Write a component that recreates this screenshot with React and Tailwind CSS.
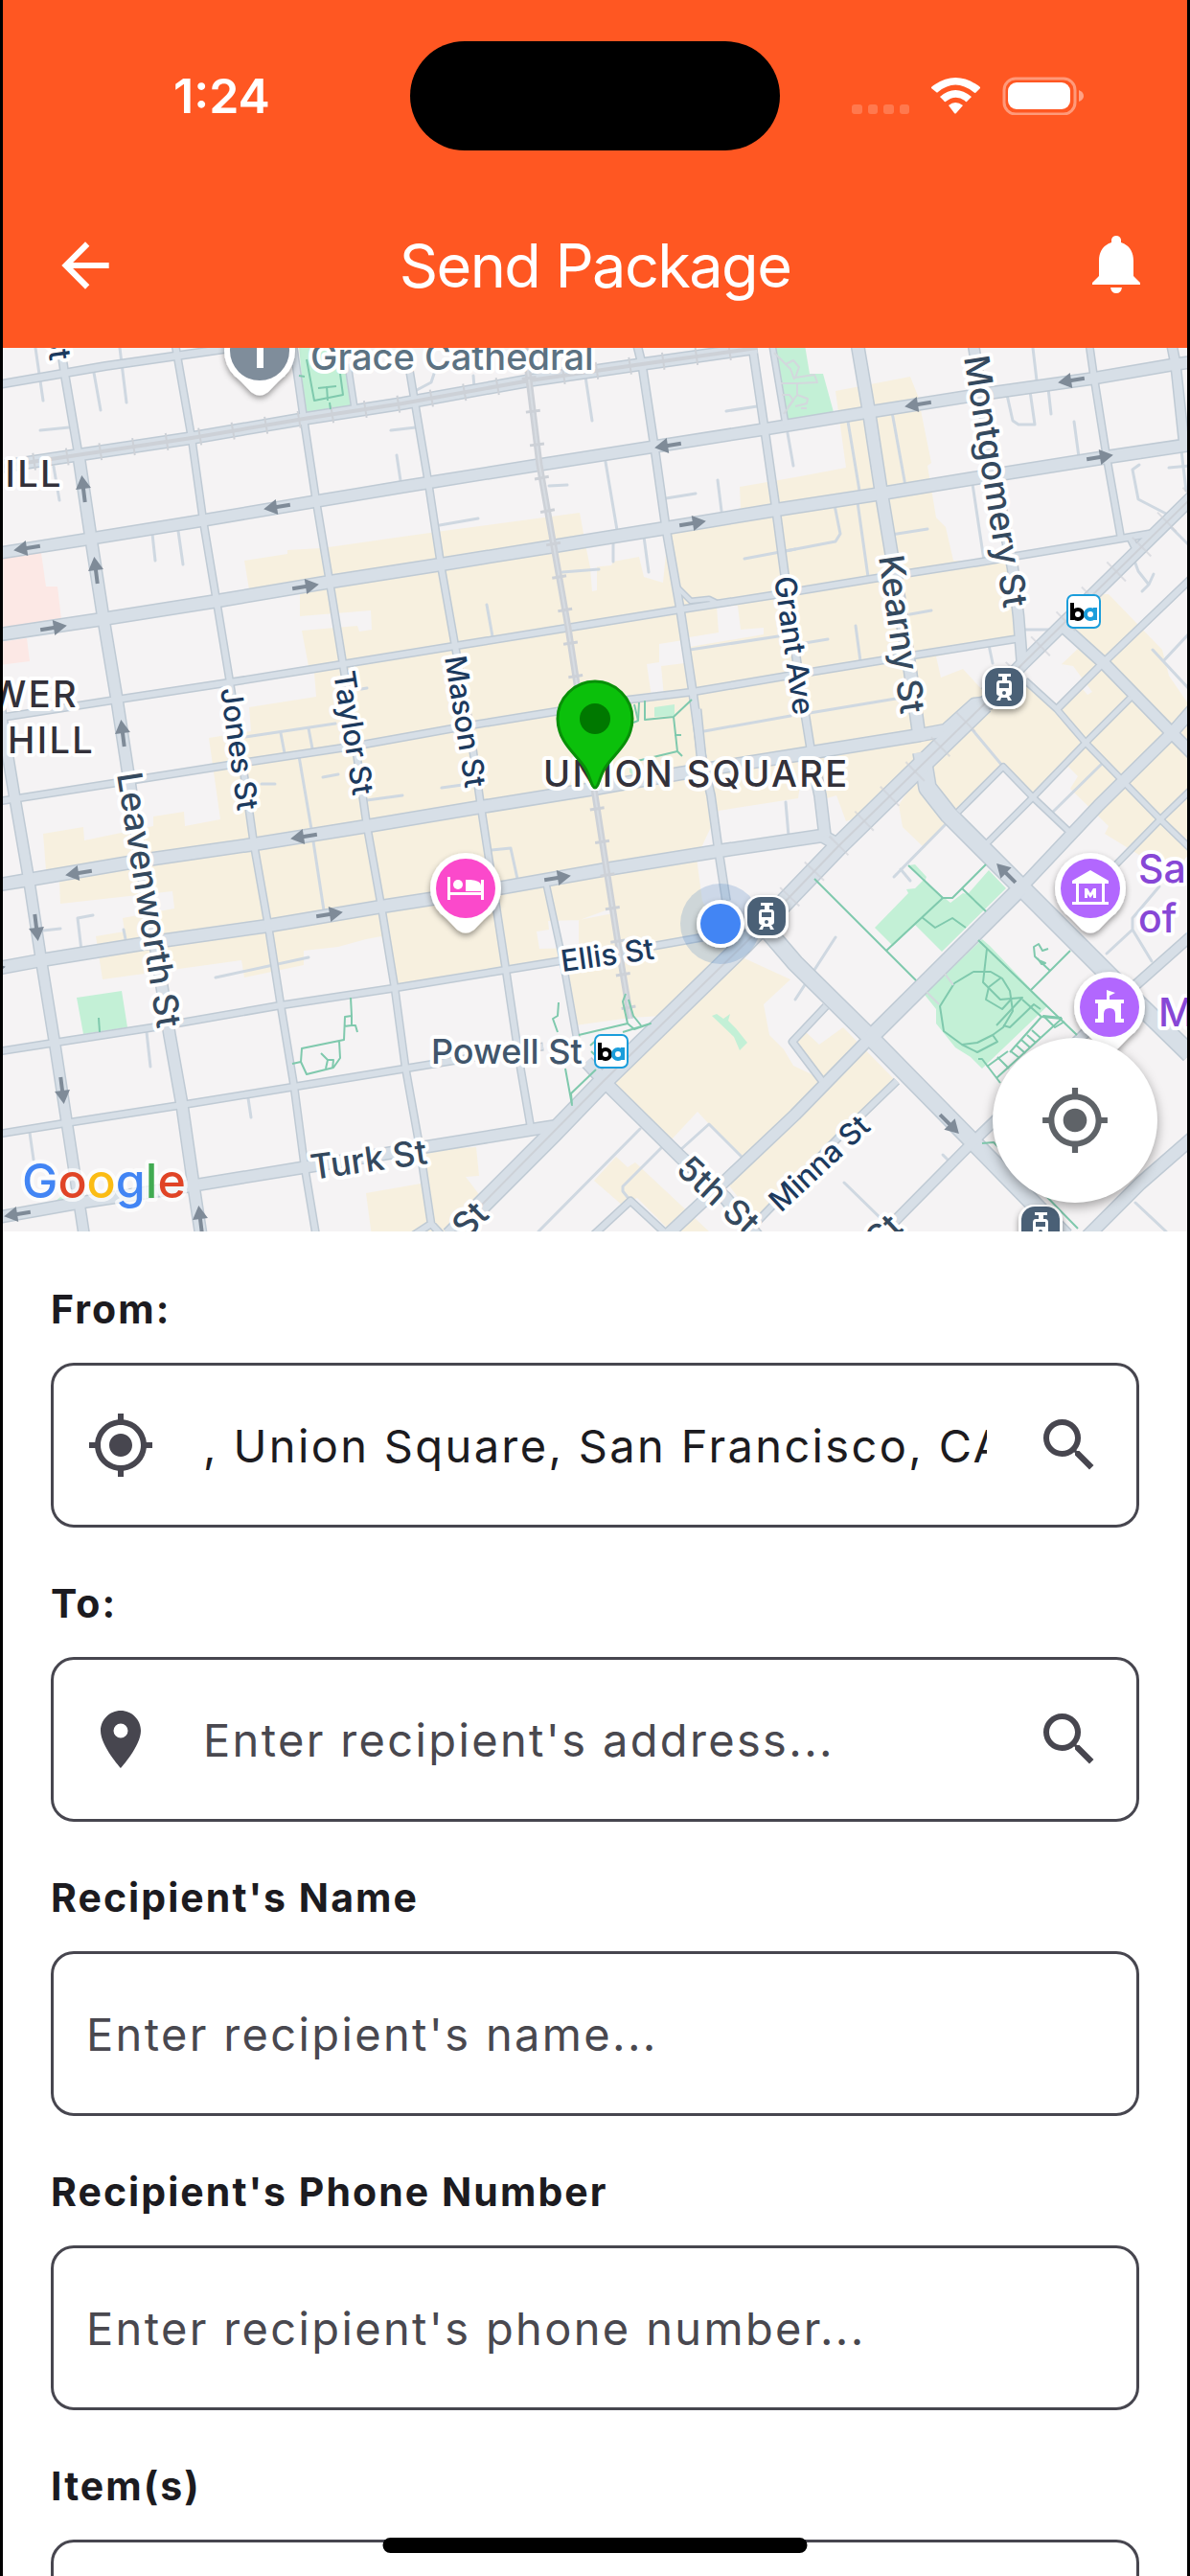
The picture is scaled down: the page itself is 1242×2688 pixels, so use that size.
import React from 'react';
import { MdArrowBack, MdMyLocation, MdPlace, MdSearch } from 'react-icons/md';

const MAP_FONT = "font-['Inter','Liberation_Sans',sans-serif]";

// street geometry: w = road width, d = points
const ROADS = [
  { w: 7, d: 'M0,401 L110,382 L235,364' },
  { w: 11, d: 'M0,487 L80,475 L200,457 L317,437 L420,421 L553,397 L670,380 L790,363' },
  { w: 11, d: 'M0,577 L95,562 L212,543 L330,523 L420,508 L563,485 L683,466 L797,448 L907,430 L1020,412 L1140,395 L1227,380 L1242,378' },
  { w: 12, d: 'M0,662 L107,646 L227,627 L345,607 L460,589 L578,570 L695,551 L810,532 L920,515 L1017,499 L1155,477 L1242,464' },
  { w: 6, d: 'M0,749 L122,730 L240,712 L358,693 L475,674 L593,655 L710,636 L807,621 L910,604 L1020,587 L1170,562 L1205,556' },
  { w: 6, d: 'M0,836 L133,815 L253,796 L373,778 L490,757 L657,730 L723,722 L823,705 L927,688 L1065,666' },
  { w: 12, d: 'M0,923 L30,918 L147,898 L265,881 L383,862 L502,842 L620,823 L710,807 L830,788 L960,767 L987,762 L1017,735 L1035,733' },
  { w: 12, d: 'M0,1010 L43,1002 L160,983 L280,966 L398,946 L520,927 L633,907 L750,888 L858,872 L872,880' },
  { w: 6, d: 'M0,1097 L57,1088 L173,1070 L293,1049 L412,1031 L528,1012 L583,1003 L683,987 L745,976' },
  { w: 6, d: 'M0,1183 L68,1172 L190,1153 L307,1134 L423,1115 L490,1104 L567,1092' },
  { w: 11, d: 'M0,1270 L83,1255 L202,1237 L318,1218 L443,1197 L553,1179 L585,1174' },
  { w: 10, d: 'M0,740 L15,830 L30,917 L43,1002 L57,1088 L70,1173 L88,1290' },
  { w: 7, d: 'M63,360 L68,393 L82,475' },
  { w: 11, d: 'M82,475 L95,562 L108,646 L122,730 L135,815 L147,898 L162,985 L177,1080 L190,1153 L202,1237 L210,1290' },
  { w: 6, d: 'M183,360 L200,457 L212,543 L226,627 L240,712 L253,796 L265,881 L280,966 L293,1049 L307,1134 L318,1218 L330,1290' },
  { w: 6, d: 'M306,360 L317,437 L330,523 L344,607 L358,693 L371,778 L383,862 L398,946 L412,1031 L423,1113 L438,1197 L450,1277 L430,1290 M450,1277 L462,1290' },
  { w: 5, d: 'M363,380 L370,426' },
  { w: 6, d: 'M425,372 L433,420 L447,503 L460,589 L475,674 L490,757 L502,842 L515,927 L528,1012 L543,1113 L554,1177' },
  { w: 7, d: 'M665,360 L670,380 L683,466 L695,551 L710,636 L723,722 L732,787 L742,830 L750,888 L758,940' },
  { w: 8, d: 'M727,740 L733,800' },
  { w: 4, d: 'M706,612 L721,627 L740,625 L750,630' },
  { w: 7, d: 'M785,360 L798,448 L810,532 L820,607 L833,700 L847,787' },
  { w: 11, d: 'M847,787 L856,830 L861,872' },
  { w: 5, d: 'M806,360 L820,443' },
  { w: 12, d: 'M895,360 L907,430 L920,515 L935,605 L950,700 L960,773' },
  { w: 17, d: 'M962,785 L968,822 L990,850 L1065,925 L1160,1020 L1242,1100' },
  { w: 10, d: 'M1016,360 L1035,480 L1057,593 L1063,643 L1067,695' },
  { w: 6, d: 'M1137,360 L1142,395 L1155,477 L1170,562 M1180,562 L1185,572' },
  { w: 9, d: 'M1223,360 L1227,380 L1236,465' },
  { w: 12, d: 'M1245,518 L1067,693 L960,803' },
  { w: 18, d: 'M1027,735 L960,800 L875,883 L777,985 L630,1128 L577,1183 L503,1257 L470,1290' },
  { w: 16, d: 'M800,970 L830,1005 L908,1082 L1017,1193 L1112,1290' },
  { w: 12, d: 'M612,1108 L637,1135 L710,1207 L757,1250 L790,1290' },
  { w: 11, d: 'M1245,740 L1223,765 L1147,840 L1065,927' },
  { w: 15, d: 'M1065,927 L908,1083' },
  { w: 11, d: 'M908,1083 L830,1163 L757,1232 L695,1290' },
  { w: 11, d: 'M1111,655 L1153,693 L1223,765 L1245,787' },
  { w: 5, d: 'M1070,710 L1103,740 L1133,775 L1172,815 L1211,855 L1245,888' },
  { w: 6, d: 'M1245,602 L1150,693 L1103,740' },
  { w: 5, d: 'M1180,728 L1133,775 L1078,832 L1030,880' },
  { w: 5, d: 'M1242,825 L1211,855 L1165,902' },
  { w: 5, d: 'M1115,867 L1078,832 L1047,800 L1000,847' },
  { w: 9, d: 'M1245,975 L1175,1037 L1017,1190 L930,1278' },
  { w: 12, d: 'M1245,1187 L1190,1235 L1135,1290' },
  { w: 6, d: 'M862,1050 L827,1087 L858,1128' },
  { w: 6, d: 'M936,1128 L880,1182 L790,1275' },
  { w: 5, d: 'M570,922 L587,1000 L602,1085' },
  { w: 6, d: 'M618,1290 L658,1253 L698,1290' },
];

const LANES = [
  'M37,363 L45,418', 'M125,363 L132,420', 'M42,449 L72,446', 'M56,487 L62,522', 'M159,557 L162,585', 'M186,554 L191,589',
  'M414,475 L419,508', 'M408,449 L434,446', 'M459,548 L499,541', 'M611,393 L618,439', 'M632,482 L644,553', 'M573,507 L592,506',
  'M695,520 L726,515', 'M749,501 L753,533', 'M758,429 L790,424', 'M640,567 L640,586', 'M672,560 L677,597', 'M587,597 L625,594',
  'M508,631 L514,664', 'M777,583 L830,573', 'M720,678 L812,664', 'M735,763 L825,747', 'M256,769 L350,755', 'M293,765 L297,786',
  'M322,760 L326,781', 'M312,789 L325,865 L338,950', 'M337,811 L353,808', 'M383,835 L420,830', 'M273,818 L287,818', 'M377,719 L383,718',
  'M461,822 L490,818', 'M513,887 L533,885 L540,917', 'M85,992 L81,958 L97,955', 'M45,971 L63,969', 'M129,970 L132,985', 'M225,1020 L322,999',
  'M153,1077 L157,1113', 'M259,1146 L262,1166', 'M31,1182 L35,1210', 'M1078,363 L1082,397', 'M1051,412 L1057,439 L1063,443 L1080,443 L1075,408',
  'M1094,405 L1097,432', 'M1121,440 L1126,477', 'M1015,505 L1027,585', 'M885,440 L897,512', 'M931,430 L945,507', 'M871,527 L877,557 L872,565 L820,575',
  'M895,524 L906,602', 'M930,558 L968,552', 'M822,452 L828,486', 'M893,653 L898,690', 'M840,671 L864,667', 'M950,641 L972,637', 'M845,744 L935,729',
  'M1068,657 L1100,657', 'M1032,673 L1036,692', 'M1189,485 L1182,490 L1188,521 L1217,536', 'M1220,488 L1242,486', 'M1233,470 L1238,512',
  'M1184,585 L1188,596 L1199,610 L1192,617 M1199,610 L1204,599', 'M1220,548 L1242,570', 'M1203,678 L1242,720 M1214,690 L1242,660',
  'M1012,758 L1047,800', 'M1150,797 L1098,848', 'M987,860 L933,915 M940,907 L950,919', 'M872,978 L830,1043', 'M668,1178 L562,1285',
  'M690,1198 L650,1238 L650,1243 L658,1253', 'M710,1200 L740,1173 L775,1208', 'M881,1234 L920,1272', 'M984,1205 L990,1211', 'M1185,1255 L1217,1285',
  'M1155,995 L1182,970 L1182,958 L1210,925 M1182,970 L1202,1003', 'M820,837 L823,872', 'M435,407 L450,399 L453,390', 'M494,392 L495,404', 'M98,389 L105,428',
];

const PATHS = [
  'M850,917 L956,1023', 'M948,903 L984,937 L994,937 L1029,902', 'M984,937 L925,992', 'M1004,927 L1029,951', 'M962,957 L976,968 L994,958 L1008,968',
  'M1021,981 L1124,1080', 'M1030,990 L1026,1025 L1044,1043 L1067,1041 L1040,1070', 'M1056,1042 L1046,1053 L1029,1043 L1032,1030 L1045,1020',
  'M1117,992 L1076,1033', 'M1096,1013 L1080,998 L1079,988 L1084,985 L1088,992 L1094,990 M1084,1002 L1091,1005 L1087,1006 L1083,1000',
  'M996,1026 L1016,1014 L1034,1014 L1046,1021 L1054,1034 L1057,1055 L1047,1072 L1036,1080 L1020,1088 L1004,1090 L985,1076 L981,1050 L996,1026',
  'M1004,1090 L1020,1098 L1041,1087 L1036,1080', 'M1047,1070 L1054,1072 L1079,1048 L1086,1053', 'M1067,1043 L1087,1061 L1054,1098', 'M1087,1061 L1108,1063 L1040,1125',
  'M1108,1062 L1089,1060 L1101,1072 L1111,1066', 'M1021,1105 L1025,1105 L1044,1130', 'M1030,1113 L1052,1097 M1041,1103 L1053,1115 M1055,1097 L1064,1104 M1061,1091 L1070,1099 M1066,1085 L1075,1093 M1072,1080 L1081,1088 M1077,1075 L1086,1083',
  'M667,733 L666,752 L661,754', 'M673,731 L673,751 L703,748 L722,730 M703,748 L707,784 L665,794', 'M704,767 L711,767 M707,784 L712,789 M662,735 L666,752', 'M661,795 L645,797',
  'M103,1062 L104,1077', 'M366,1041 L367,1060 L360,1061 L359,1085 L315,1094 L314,1108 L320,1121 L348,1114 L355,1104 L354,1086 M367,1060 L367,1070 L359,1071 M367,1070 L371,1070 L373,1077 M335,1099 L342,1106 L348,1106 L347,1115 M342,1106 L340,1115 M314,1108 L305,1110',
  'M583,1046 L582,1060 L577,1063 L582,1077 M590,1115 L597,1153 L596,1141 L622,1116', 'M653,1037 L650,1045 L655,1068 L604,1080 M655,1068 L662,1074 L679,1068 L650,1077 M656,1043 L661,1060 L669,1070 M616,1091 L625,1083 M617,1097 L630,1110',
  'M1025,1193 L1037,1192 L1125,1282', 'M320,375 L328,418 L358,412 L353,375 M332,405 L351,403 M341,403 L342,418 M312,392 L318,393 M344,420 L345,427',
];

const GARDEN_PATHS = [
  'M808,368 L825,385 L829,396 M820,380 L828,376 L834,383 L830,394 L850,391 L853,399 L832,400 L832,412 L822,425', 'M815,400 L832,400 M816,412 L824,412 L828,418 L818,432 M832,412 L843,416 L842,421 L830,424 M842,426 L836,426', 'M986,1016 L995,1028 M967,1035 L980,1048',
];

const ARROWS = [
  [56, 655, -9], [319, 612, -9], [344, 954, -9], [582, 916, -9], [723, 546, -9], [1148, 477, -9],
  [28, 572, 171], [289, 529, 171], [697, 465, 171], [958, 422, 171], [1118, 397, 171], [317, 873, 171], [82, 911, 171], [18, 1267, 171],
  [87, 510, -97], [100, 595, -97], [128, 765, -97], [209, 1272, -97],
  [38, 968, 83], [65, 1138, 83], [1050, 911, -135], [991, 1173, 45], [-8, 1011, -9],
];

function StreetLabel({ x, y, r = 0, size = 32, color = '#34495e', anchor = 'start', weight = 500, children }) {
  return (
    <text
      transform={`translate(${x} ${y}) rotate(${r})`}
      fontSize={size}
      fontWeight={weight}
      textAnchor={anchor}
      fill={color}
      stroke="#fff"
      strokeWidth="8"
      strokeLinejoin="round"
      paintOrder="stroke"
    >
      {children}
    </text>
  );
}

function PlacePin({ x, y, color, children }) {
  return (
    <g transform={`translate(${x} ${y})`}>
      <g filter="url(#pin-shadow)" fill="#fff">
        <circle r="37" />
        <path d="M-31,20 L-9,43 Q0,50 9,43 L31,20 Z" />
      </g>
      <circle r="31" fill={color} />
      {children}
    </g>
  );
}

function TramStop({ x, y }) {
  return (
    <g transform={`translate(${x} ${y})`}>
      <rect x="-23" y="-22" width="46" height="45" rx="16" fill="#fff" filter="url(#pin-shadow)" />
      <rect x="-20" y="-20" width="40" height="40" rx="14" fill="#4a6076" />
      <path d="M-6,-14 H7 V-11 H3 V-7 H5 Q8,-7 8,-3 V6 Q8,9 5,9 L8,14 H4 L3,11 H-3 L-4,14 H-8 L-5,9 Q-8,9 -8,6 V-3 Q-8,-7 -5,-7 H-2 V-11 H-6 Z" fill="#fff" />
      <rect x="-5" y="-4" width="10" height="5" fill="#4a6076" />
      <circle cy="6" r="2" fill="#4a6076" />
    </g>
  );
}

function BartStop({ x, y }) {
  return (
    <g transform={`translate(${x} ${y})`}>
      <rect x="-17" y="-17" width="34" height="34" rx="6" fill="#fff" stroke="#1a9ddb" strokeWidth="2" />
      <path d="M-14,-9 H-10 V9 H-14 Z" fill="#000" />
      <circle cx="-6" cy="3" r="5" fill="none" stroke="#000" strokeWidth="4" />
      <path d="M10,-4 H14 V9 H10 Z" fill="#1a9ddb" />
      <circle cx="7" cy="3" r="5" fill="none" stroke="#1a9ddb" strokeWidth="4" />
    </g>
  );
}

function CityMap() {
  return (
    <svg viewBox="3 363 1236 922" className={`block h-auto w-full ${MAP_FONT}`} role="img" aria-label="Map of Union Square">
      <defs>
        <filter id="pin-shadow" x="-30%" y="-30%" width="160%" height="160%">
          <feDropShadow dx="0" dy="3" stdDeviation="3" floodColor="#000" floodOpacity="0.4" />
        </filter>
      </defs>

      <rect x="0" y="360" width="1242" height="930" fill="#f5f3f4" />

      {/* commercial blocks */}
      <g fill="#f7f0df">
        <path d="M255,585 L300,578 L300,574 L335,572 L350,570 L420,560 L470,553 L605,535 L612,573 L616,592 L638,590 L640,586 L667,581 L672,602 L692,608 L697,557 L773,530 L772,508 L830,498 L883,488 L872,408 L950,393 L958,413 L972,483 L968,486 L977,540 L987,550 L995,585 L1050,587 L1062,667 L977,685 L982,707 L1005,698 L1030,725 L920,845 L883,857 L873,830 L863,833 L856,817 L835,820 L833,833 L750,846 L727,895 L733,940 L760,990 L690,1060 L658,1062 L600,1070 L587,1003 L412,1031 L398,977 L382,980 L353,988 L317,992 L317,1007 L255,1020 L252,1002 L107,1022 L100,977 L130,972 L128,958 L182,948 L180,930 L63,943 L62,920 L48,908 L45,870 L87,863 L88,877 L160,862 L160,852 L192,847 L193,862 L230,855 L218,770 L262,763 L260,738 L330,727 L328,702 L322,695 L315,658 L373,653 L375,659 L388,657 L387,637 L313,643 L313,618 L260,615 Z" />
        <path d="M1111,655 L1140,620 L1157,620 L1213,678 L1220,705 L1242,737 L1242,905 L1197,897 L1153,870 L1157,862 L1117,823 L1125,810 L1115,800 L1078,832 L1047,800 L1002,840 L965,885 L942,863 L938,840 L960,807 L1030,728 L1070,710 L1103,740 L1128,715 L1108,693 L1127,675 Z" />
        <path d="M760,990 L777,1000 L825,1022 L797,1048 L803,1080 L818,1095 L828,1112 L862,1128 L935,1128 L830,1235 L790,1275 L757,1232 L775,1208 L740,1173 L728,1160 L700,1190 L637,1130 Z" />
        <path d="M829,1086 L841,1077 L855,1090 L880,1072 L935,1128 L862,1130 Z" />
        <path d="M643,1207 L655,1218 L663,1213 L740,1285 L700,1285 L665,1250 L650,1258 L620,1232 Z" />
        <path d="M443,1200 L497,1197 L500,1227 L486,1228 L505,1253 L470,1290 L388,1290 L382,1245 L445,1234 Z" />
      </g>
      <g fill="#f5f3f4">
        <path d="M748,633 L770,632 L773,657 L797,655 L797,662 L720,675 L719,665 L750,660 Z" />
        <path d="M688,672 L713,668 L715,692 L690,695 L693,727 L680,727 L675,693 L688,691 Z" />
        <path d="M560,972 L573,970 L572,961 L605,960 L640,947 L640,953 L604,960 L604,989 L563,990 Z" />
        <path d="M616,592 L623,590 L623,616 L618,617 Z" />
        <path d="M1078,836 L1112,867 L1065,915 L1034,882 Z M1047,804 L1075,832 L1030,876 L1004,847 Z" />
        <path d="M1108,693 L1135,725 L1140,722 L1120,695 Z" />
      </g>

      {/* hospital grounds */}
      <path d="M0,578 L43,577 L48,612 L60,612 L64,646 L0,656 Z M0,670 L28,666 L31,690 L0,694 Z" fill="#fce8e5" />

      {/* parks */}
      <g fill="#c3f0d6">
        <path d="M312,360 L358,360 L367,423 L318,431 Z" />
        <path d="M808,360 L840,360 L845,390 L859,390 L870,430 L820,438 Z" />
        <path d="M80,1041 L127,1034 L133,1072 L87,1079 Z" />
        <path d="M683,738 L704,735 L704,747 L683,748 Z" />
        <path d="M743,1060 L748,1058 L755,1063 L762,1058 L760,1065 L768,1073 L780,1088 L772,1096 L766,1082 Z" />
        <path d="M913,968 L948,932 L946,928 L955,927 L965,917 L948,903 L955,902 L967,915 L965,920 L992,942 L1005,932 L1010,933 L1032,908 L1050,927 L983,993 L955,965 L932,987 Z" />
        <path d="M1025,980 L1033,987 L1093,1050 L1025,1115 L1013,1103 L997,1093 L977,1068 L977,1053 L965,1038 Z" />
        <path d="M58,1253 L67,1246 L68,1253 Z" />
        <circle cx="661" cy="804" r="4" />
      </g>

      <g fill="none" strokeLinejoin="round">
        <g stroke="#cfd8e1" strokeWidth="3" strokeLinecap="round">
          {LANES.map((d) => <path key={d} d={d} />)}
        </g>
        <g stroke="#bfcad4">
          {ROADS.map(({ w, d }) => <path key={d} d={d} strokeWidth={w + 3} />)}
        </g>
        <g stroke="#d7dfe7">
          {ROADS.map(({ w, d }) => <path key={d} d={d} strokeWidth={w} />)}
        </g>

        {/* cable car and rail tracks */}
        <g stroke="#cdd1d7">
          <path d="M0,487 L80,475 L200,457 L317,437 L420,421 L553,397 L670,380 L790,363" strokeWidth="4" />
          <path d="M0,487 L80,475 L200,457 L317,437 L420,421 L553,397 L670,380 L790,363" strokeWidth="18" strokeDasharray="2 33" />
          <path d="M548,363 L563,485 L578,570 L593,655 L606,740 L620,823 L633,907 L647,997 L658,1063" strokeWidth="7" />
          <path d="M548,363 L563,485 L578,570 L593,655 L606,740 L620,823 L633,907 L647,997 L658,1063" stroke="#d7dce2" strokeWidth="2" />
          <path d="M552,393 L563,485 L578,570 L593,655 L606,740 L620,823 L633,907 L647,997 L658,1063" strokeWidth="15" strokeDasharray="3 32" />
          <path d="M1245,518 L1067,693 L1027,735 L875,883 L777,985 L630,1128 L503,1257 L470,1290" strokeWidth="2" />
          <path d="M1245,518 L1067,693 L1027,735 L875,883 L777,985" strokeWidth="28" strokeDasharray="2 35" opacity="0.6" />
        </g>

        <g stroke="#7fc9ad" strokeWidth="2">
          {PATHS.map((d) => <path key={d} d={d} />)}
        </g>
        <g stroke="#d3d8dd" strokeWidth="2">
          {GARDEN_PATHS.map((d) => <path key={d} d={d} />)}
        </g>
      </g>

      {/* one-way arrows */}
      <g fill="#7f8b98">
        {ARROWS.map(([x, y, r]) => (
          <path key={`${x}-${y}`} transform={`translate(${x} ${y}) rotate(${r})`} d="M-14,-2 H0 V-8 L14,0 L0,8 V2 H-14 Z" />
        ))}
      </g>

      <StreetLabel x={52} y={377} r={82} anchor="end" color="#1c3a5e">St</StreetLabel>
      <StreetLabel x={230} y={719} r={82} color="#1c3a5e" size={31}>Jones St</StreetLabel>
      <StreetLabel x={348} y={702} r={81} color="#1c3a5e" size={31}>Taylor St</StreetLabel>
      <StreetLabel x={464} y={686} r={81} color="#1c3a5e" size={31}>Mason St</StreetLabel>
      <StreetLabel x={808} y={603} r={82} color="#1c3a5e" size={31}>Grant Ave</StreetLabel>
      <StreetLabel x={122} y={808} r={81} size={36}>Leavenworth St</StreetLabel>
      <StreetLabel x={917} y={581} r={82} size={36}>Kearny St</StreetLabel>
      <StreetLabel x={1006} y={373} r={81} size={36}>Montgomery St</StreetLabel>
      <StreetLabel x={587} y={1014} r={-8} color="#1c3a5e" size={31}>Ellis St</StreetLabel>
      <StreetLabel x={326} y={1231} r={-8} size={36}>Turk St</StreetLabel>
      <StreetLabel x={450} y={1110} color="#41566c" size={36}>Powell St</StreetLabel>
      <StreetLabel x={815} y={1266} r={-43} color="#1c3a5e" size={31}>Minna St</StreetLabel>
      <StreetLabel x={704} y={1222} r={43} size={36}>5th St</StreetLabel>
      <StreetLabel x={512} y={1269} r={-45} anchor="end" size={36}>St</StreetLabel>
      <StreetLabel x={944} y={1283} r={-43} anchor="end" size={36}>St</StreetLabel>
      <StreetLabel x={324} y={386} color="#5c7282" size={38}>Grace Cathedral</StreetLabel>

      {/* neighbourhood names are set wide */}
      <g className="tracking-[0.15em]">
        <StreetLabel x={66} y={508} anchor="end" color="#33313a" size={38}>HILL</StreetLabel>
        <StreetLabel x={82} y={738} anchor="end" color="#33313a" size={38}>LOWER</StreetLabel>
        <StreetLabel x={8} y={786} color="#33313a" size={38}>HILL</StreetLabel>
        <StreetLabel x={567} y={821} color="#33313a" size={38}>UNION SQUARE</StreetLabel>
      </g>

      <StreetLabel x={1188} y={921} color="#8747d6" size={41}>San</StreetLabel>
      <StreetLabel x={1188} y={973} color="#8747d6" size={41}>of M</StreetLabel>
      <StreetLabel x={1209} y={1071} color="#8747d6" size={41}>M</StreetLabel>

      <BartStop x={1131} y={638} />
      <BartStop x={638} y={1097} />
      <TramStop x={1048} y={717} />

      {/* current position */}
      <circle cx="752" cy="964" r="42" fill="#3f7cc0" opacity="0.22" />
      <TramStop x={800} y={956} />
      <circle cx="752" cy="964" r="25" fill="#fff" filter="url(#pin-shadow)" />
      <circle cx="752" cy="964" r="21" fill="#4285f4" />
      <TramStop x={1086} y={1279} />

      <PlacePin x={271} y={366} color="#7f8d9b">
        <path d="M-3,-20 H4 V18 H-3 Z M-12,-12 H12 V-5 H-12 Z" fill="#fff" />
      </PlacePin>
      <PlacePin x={486} y={927} color="#fb49cb">
        <path d="M-19,-12 H-16 V4 H16 V-9 H19 V12 H16 V7 H-16 V12 H-19 Z M0,-9 H5 Q16,-8 16,-3 V3 H0 Z" fill="#fff" />
        <circle cx="-8" cy="-4" r="5" fill="#fff" />
      </PlacePin>
      <PlacePin x={1138} y={927} color="#b267fe">
        <path d="M0,-19 L19,-8 V-5 H15 V14 H19 V17 H-19 V14 H-15 V-5 H-19 V-8 Z" fill="#fff" />
        <path d="M-12,-5 H12 V14 H-12 Z" fill="#b267fe" />
        <path d="M-6,10 V0 H-3 L0,5 L3,0 H6 V10 H3 V6 L0,10 L-3,6 V10 Z" fill="#fff" />
      </PlacePin>
      <PlacePin x={1158} y={1051} color="#b267fe">
        <path d="M-3,-18 L6,-15 L0,-12 V-8 H15 V-4 H12 V12 H15 V16 H6 V7 Q6,1 0,1 Q-6,1 -6,7 V16 H-15 V12 H-12 V-4 H-15 V-8 H-3 Z" fill="#fff" />
      </PlacePin>

      {/* pickup marker */}
      <path d="M621,822 C617,822 616,808 609,799 C601,787 582,774 582,750 A39,39 0 0 1 660,750 C660,774 641,787 633,799 C626,808 625,822 621,822 Z" fill="#0bc00b" stroke="#088f08" strokeWidth="3" />
      <circle cx="621" cy="750" r="16" fill="#007800" />

      <text x="23" y="1250" fontSize="50" stroke="#fff" strokeOpacity="0.7" strokeWidth="8" paintOrder="stroke" strokeLinejoin="round" fontWeight="500">
        <tspan fill="#4285f4">G</tspan>
        <tspan fill="#e04426">o</tspan>
        <tspan fill="#fbbc14">o</tspan>
        <tspan fill="#4285f4">g</tspan>
        <tspan fill="#41ab52">l</tspan>
        <tspan fill="#e04426">e</tspan>
      </text>
    </svg>
  );
}

function StatusBar() {
  return (
    <div className="grid grid-cols-[1fr_386px_1fr] items-center">
      <span className="pl-8 text-center text-[50px] leading-none font-semibold">1:24</span>
      <div className="h-[114px] rounded-full bg-black" />
      <svg viewBox="0 0 242 40" className="mr-[108px] h-10 w-[242px] justify-self-end" aria-hidden="true">
        <g fill="#fff" opacity="0.2">
          <rect x="0" y="29" width="11" height="10" rx="3" />
          <rect x="17" y="29" width="10" height="10" rx="3" />
          <rect x="33" y="29" width="11" height="10" rx="3" />
          <rect x="50" y="29" width="10" height="10" rx="3" />
        </g>
        <path d="M83,11 Q85,9 87,8 Q108,-6 130,8 Q132,9 134,11 Q134,12 134,12 L129,17 Q128,17 127,16 Q108,1 90,16 Q89,17 88,16 L83,12 Z" fill="#fff" />
        <path d="M92,21 Q108,7 125,21 L120,26 Q119,27 118,25 Q108,18 98,26 Q97,27 96,25 Z" fill="#fff" />
        <path d="M101,30 Q108,24 116,30 L109,38 Q108,39 107,38 Z" fill="#fff" />
        <rect x="159" y="2" width="74" height="37" rx="12" fill="none" stroke="#fff" strokeWidth="3" opacity="0.4" />
        <rect x="163" y="6" width="65" height="28" rx="9" fill="#fff" />
        <path d="M237,14 Q242,16 242,20 Q242,24 237,26 Z" fill="#fff" opacity="0.45" />
      </svg>
    </div>
  );
}

function BellIcon() {
  return (
    <svg viewBox="0 0 50 62" className="h-[62px] w-[50px]" fill="currentColor" aria-hidden="true">
      <path d="M25,0 Q29,0 30,4 V7 C39,10 43,17 43,26 V42 L50,49 V51 H0 V49 L7,42 V26 C7,17 11,10 20,7 V4 Q21,0 25,0 Z" />
      <path d="M19,54 H31 Q30,60 25,60 Q20,60 19,54 Z" />
    </svg>
  );
}

function Field({ id, label, placeholder, defaultValue, icon: Icon, search, type = 'text' }) {
  return (
    <div>
      <label htmlFor={id} className="mb-[26px] block text-[41px] leading-[60px] font-bold tracking-wider">
        {label}
      </label>
      <div className="flex h-[172px] items-center gap-[50px] rounded-3xl border-[3px] border-[#47464f] px-[34px]">
        {Icon && <Icon className="size-[72px] shrink-0 text-[#47464f]" />}
        <input
          id={id}
          type={type}
          placeholder={placeholder}
          defaultValue={defaultValue}
          className="h-full min-w-0 flex-1 bg-transparent text-[47px] tracking-wider outline-none placeholder:text-[#49484f]"
        />
        {search && (
          <button type="button" aria-label={`Search ${label}`} className="shrink-0 text-[#47464f]">
            <MdSearch className="size-[72px]" />
          </button>
        )}
      </div>
    </div>
  );
}

export default function App() {
  return (
    <div className="relative flex h-screen flex-col overflow-hidden border-x-[3px] border-black bg-white font-['Inter','Liberation_Sans',sans-serif] text-[#1c1b20]">
      <header className="shrink-0 bg-[#ff5722] pt-[43px] text-white">
        <StatusBar />
        <div className="mt-[34px] grid h-[172px] grid-cols-[1fr_auto_1fr] items-center px-[49px]">
          <button type="button" aria-label="Back" className="justify-self-start">
            <MdArrowBack className="size-[74px]" />
          </button>
          <h1 className="text-[63px] leading-none font-normal tracking-tight">Send Package</h1>
          <button type="button" aria-label="Notifications" className="justify-self-end">
            <BellIcon />
          </button>
        </div>
      </header>

      <section className="relative shrink-0">
        <CityMap />
        <button
          type="button"
          aria-label="My location"
          className="absolute right-[31px] bottom-[30px] flex size-[172px] items-center justify-center rounded-full bg-white text-[#5f6368] shadow-[0_4px_12px_rgba(0,0,0,0.35)]"
        >
          <MdMyLocation className="size-[74px]" />
        </button>
      </section>

      <form className="flex min-h-0 flex-1 flex-col gap-[49px] overflow-hidden px-[50px] pt-[51px]">
        <Field id="from" label="From:" defaultValue=", Union Square, San Francisco, CA" icon={MdMyLocation} search />
        <Field id="to" label="To:" placeholder="Enter recipient's address..." icon={MdPlace} search />
        <Field id="recipient-name" label="Recipient's Name" placeholder="Enter recipient's name..." />
        <Field id="recipient-phone" label="Recipient's Phone Number" placeholder="Enter recipient's phone number..." type="tel" />
        <Field id="items" label="Item(s)" />
      </form>

      {/* home indicator */}
      <div className="absolute bottom-6 left-1/2 h-4 w-[443px] -translate-x-1/2 rounded-full bg-black" />
    </div>
  );
}
